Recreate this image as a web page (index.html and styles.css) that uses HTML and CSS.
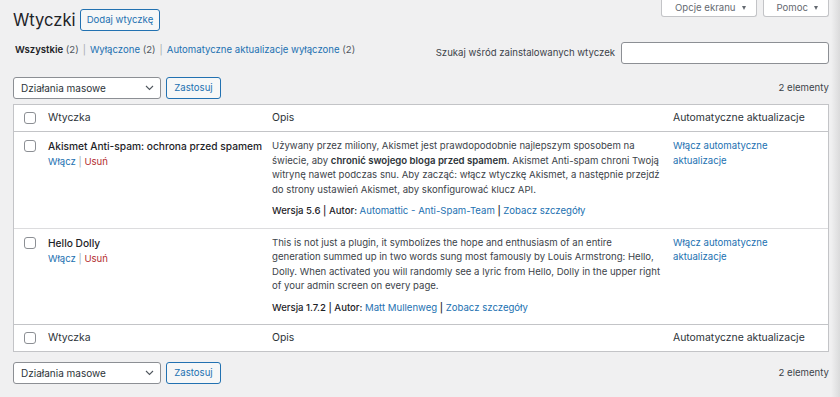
FILE: index.html
```html
<!DOCTYPE html>
<html lang="pl">
<head>
<meta charset="utf-8">
<title>Wtyczki</title>
<link rel="stylesheet" href="styles.css">
</head>
<body>
<div class="top">
  <div class="heading">
    <h1 class="page-title">Wtyczki</h1>
    <button class="btn-outline add-new">Dodaj wtyczkę</button>
  </div>
  <div class="meta-links">
    <button class="meta-tab">Opcje ekranu <span class="caret"></span></button>
    <button class="meta-tab">Pomoc <span class="caret"></span></button>
  </div>
</div>

<div class="filters">
  <ul class="subsubsub">
    <li><span class="current">Wszystkie</span> <span class="count">(2)</span></li>
    <li class="sep">|</li>
    <li><a href="#">Wyłączone <span class="count">(2)</span></a></li>
    <li class="sep">|</li>
    <li><a href="#">Automatyczne aktualizacje wyłączone <span class="count">(2)</span></a></li>
  </ul>
  <div class="search">
    <label class="search-label" for="s">Szukaj wśród zainstalowanych wtyczek</label>
    <input class="search-input" id="s" type="search">
  </div>
</div>

<div class="tablenav">
  <div class="bulk">
    <div class="select">Działania masowe
      <svg class="chev" width="9" height="6" viewBox="0 0 9 6"><path d="M1 1l3.5 3.5L8 1" fill="none" stroke="#50575e" stroke-width="1.1"/></svg>
    </div>
    <button class="btn-outline apply">Zastosuj</button>
  </div>
  <div class="num">2 elementy</div>
</div>

<table class="plugins">
  <thead>
    <tr>
      <th class="col-cb"><span class="cb"></span></th>
      <th class="col-name">Wtyczka</th>
      <th class="col-desc">Opis</th>
      <th class="col-auto">Automatyczne aktualizacje</th>
    </tr>
  </thead>
  <tbody>
    <tr class="row">
      <td class="col-cb"><span class="cb"></span></td>
      <td class="col-name">
        <div class="plugin-title">Akismet Anti-spam: ochrona przed spamem</div>
        <div class="actions"><a href="#">Włącz</a> <span class="bar">|</span> <a class="del" href="#">Usuń</a></div>
      </td>
      <td class="col-desc">
        <p class="desc">Używany przez miliony, Akismet jest prawdopodobnie najlepszym sposobem na<br>świecie, aby <strong>chronić swojego bloga przed spamem</strong>. Akismet Anti-spam chroni Twoją<br>witrynę nawet podczas snu. Aby zacząć: włącz wtyczkę Akismet, a następnie przejdź<br>do strony ustawień Akismet, aby skonfigurować klucz API.</p>
        <div class="meta">Wersja 5.6 | Autor: <a href="#">Automattic - Anti-Spam-Team</a> | <a href="#">Zobacz szczegóły</a></div>
      </td>
      <td class="col-auto"><a href="#">Włącz automatyczne aktualizacje</a></td>
    </tr>
    <tr class="row">
      <td class="col-cb"><span class="cb"></span></td>
      <td class="col-name">
        <div class="plugin-title">Hello Dolly</div>
        <div class="actions"><a href="#">Włącz</a> <span class="bar">|</span> <a class="del" href="#">Usuń</a></div>
      </td>
      <td class="col-desc">
        <p class="desc">This is not just a plugin, it symbolizes the hope and enthusiasm of an entire<br>generation summed up in two words sung most famously by Louis Armstrong: Hello,<br>Dolly. When activated you will randomly see a lyric from Hello, Dolly in the upper right<br>of your admin screen on every page.</p>
        <div class="meta">Wersja 1.7.2 | Autor: <a href="#">Matt Mullenweg</a> | <a href="#">Zobacz szczegóły</a></div>
      </td>
      <td class="col-auto"><a href="#">Włącz automatyczne aktualizacje</a></td>
    </tr>
  </tbody>
  <tfoot>
    <tr>
      <th class="col-cb"><span class="cb"></span></th>
      <th class="col-name">Wtyczka</th>
      <th class="col-desc">Opis</th>
      <th class="col-auto">Automatyczne aktualizacje</th>
    </tr>
  </tfoot>
</table>

<div class="tablenav bottom">
  <div class="bulk">
    <div class="select">Działania masowe
      <svg class="chev" width="9" height="6" viewBox="0 0 9 6"><path d="M1 1l3.5 3.5L8 1" fill="none" stroke="#50575e" stroke-width="1.1"/></svg>
    </div>
    <button class="btn-outline apply">Zastosuj</button>
  </div>
  <div class="num">2 elementy</div>
</div>
</body>
</html>
```

FILE: styles.css
```css
html {
  background: linear-gradient(to right, #f0f0f1 0, #f0f0f1 831px, #e4e4e5 836px, #dadadb 840px);
}
body {
  margin: 0;
  font-family: Inter, "Noto Sans", "DejaVu Sans", sans-serif;
  font-size: 9.6px;
  line-height: 14.5px;
  color: #3c434a;
  width: 840px;
  height: 397px;
  overflow: hidden;
}
a { color: #2271b1; text-decoration: none; }
button { font-family: inherit; }

.top {
  display: flex;
  justify-content: space-between;
  align-items: flex-start;
  padding: 0 11px 0 13px;
}
.heading {
  display: flex;
  align-items: center;
  gap: 4px;
  margin-top: 9px;
}
.page-title {
  margin: 0;
  font-size: 16.6px;
  font-weight: 400;
  line-height: 22px;
  color: #1d2327;
}
.btn-outline {
  height: 22px;
  box-sizing: border-box;
  border: 1px solid #2271b1;
  border-radius: 3px;
  background: #f6f7f7;
  color: #2271b1;
  font-size: 9.6px;
  padding: 0 6px;
  line-height: 20px;
}
.meta-links {
  display: flex;
  gap: 6px;
}
.meta-tab {
  height: 17px;
  box-sizing: border-box;
  background: #fff;
  border: 1px solid #c3c4c7;
  border-top: none;
  border-radius: 0 0 3px 3px;
  color: #646970;
  font-size: 9.6px;
  padding: 0 10px 1px 13px;
  display: flex;
  align-items: center;
  gap: 6px;
}
.caret {
  width: 0;
  height: 0;
  border-left: 2.5px solid transparent;
  border-right: 2.5px solid transparent;
  border-top: 4px solid #646970;
}

.filters {
  display: flex;
  justify-content: space-between;
  align-items: flex-start;
  margin-top: 11px;
  padding: 0 11px 0 15px;
}
.subsubsub {
  list-style: none;
  margin: 1px 0 0;
  padding: 0;
  display: flex;
  gap: 4px;
  color: #646970;
}
.subsubsub .current { color: #1d2327; font-weight: 600; }
.subsubsub .sep { color: #a7aaad; }
.subsubsub .count { color: #50575e; }
.search {
  display: flex;
  align-items: center;
  gap: 6px;
}
.search-label { color: #3c434a; }
.search-input {
  width: 208px;
  height: 22px;
  box-sizing: border-box;
  border: 1px solid #8c8f94;
  border-radius: 3px;
  background: #fff;
  margin: 0;
}

.tablenav {
  display: flex;
  justify-content: space-between;
  align-items: center;
  padding: 0 11px 0 13px;
  margin-top: 13px;
  margin-bottom: 5px;
}
.tablenav.bottom { margin-top: 10px; }
.bulk { display: flex; gap: 5px; }
.select {
  width: 148px;
  height: 22px;
  box-sizing: border-box;
  border: 1px solid #8c8f94;
  border-radius: 3px;
  background: #fff;
  color: #2c3338;
  padding: 0 6px 0 7px;
  display: flex;
  align-items: center;
  justify-content: space-between;
  font-size: 10px;
}
.apply { width: 55px; padding: 0; }
.num { color: #3c434a; }

.plugins {
  margin-left: 13px;
  width: 816px;
  border: 1px solid #c3c4c7;
  border-spacing: 0;
  background: #fff;
  table-layout: fixed;
}
.plugins th {
  font-weight: 400;
  text-align: left;
  color: #2c3338;
  font-size: 10.4px;
  height: 26px;
  padding: 0 7px;
  vertical-align: middle;
}
.plugins thead th { border-bottom: 1px solid #c3c4c7; }
.plugins tfoot th { border-top: 1px solid #c3c4c7; }
.plugins td {
  vertical-align: top;
  padding: 7px 7px 9px;
}
.plugins tbody tr + tr td { border-top: 1px solid #dcdcde; }
.col-cb { width: 17px; }
.plugins th.col-cb, .plugins td.col-cb { padding: 0 0 0 10px; }
.plugins td.col-cb { padding-top: 8px; }
.col-name { width: 210px; }
.col-desc { width: 392px; }
.plugins td.col-desc, .plugins th.col-desc { padding-right: 2px; }
.cb {
  display: block;
  width: 12px;
  height: 12px;
  box-sizing: border-box;
  border: 1px solid #8c8f94;
  border-radius: 3px;
  background: #fff;
}
.plugin-title {
  font-size: 10.2px;
  font-weight: 500;
  color: #1d2327;
  line-height: 15px;
  margin-bottom: 1px;
  white-space: nowrap;
}
.actions { color: #a7aaad; }
.actions .del { color: #b32d2e; }
.desc { margin: 0 0 7px; white-space: nowrap; }
.desc strong { font-weight: 600; color: #2c3338; }
.meta { font-weight: 500; color: #1d2327; }
.meta a { font-weight: 400; }
.col-auto a { display: block; width: 110px; }
```
